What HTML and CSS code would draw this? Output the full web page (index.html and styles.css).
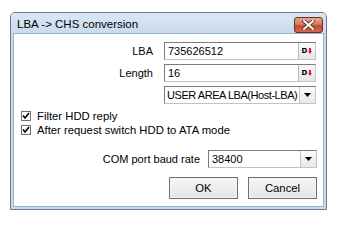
FILE: index.html
```html
<!DOCTYPE html>
<html>
<head>
<meta charset="utf-8">
<link rel="stylesheet" href="styles.css">
</head>
<body>
<div class="win">
  <div class="titlebar">
    <span class="title">LBA -&gt; CHS conversion</span>
    <div class="close">
      <svg width="13" height="10" viewBox="0 0 13 10">
        <path d="M2 1 L11 9 M11 1 L2 9" stroke="#5a2a20" stroke-width="3.6" stroke-linecap="square"/>
        <path d="M2 1 L11 9 M11 1 L2 9" stroke="#ffffff" stroke-width="2" stroke-linecap="square"/>
      </svg>
    </div>
  </div>
  <div class="client">
    <div class="grid">
      <label class="lbl">LBA</label>
      <div class="field"><span class="val">735626512</span><span class="dbtn"><b>D</b><svg width="4" height="6" viewBox="0 0 4 6"><path d="M1 0 H3 V3 H4 L2 6 L0 3 H1 Z" fill="#e02020"/></svg></span></div>
      <label class="lbl">Length</label>
      <div class="field"><span class="val">16</span><span class="dbtn"><b>D</b><svg width="4" height="6" viewBox="0 0 4 6"><path d="M1 0 H3 V3 H4 L2 6 L0 3 H1 Z" fill="#e02020"/></svg></span></div>
      <span></span>
      <div class="field"><span class="val narrow">USER AREA LBA(Host-LBA)</span><span class="arrow"><svg width="7" height="4" viewBox="0 0 7 4"><path d="M0 0 H7 L3.5 4 Z" fill="#000"/></svg></span></div>
    </div>
    <div class="checks">
      <div class="chk"><span class="box"><svg width="8" height="8" viewBox="0 0 8 8"><path d="M1 3.5 L3 6 L7 1" stroke="#000" stroke-width="1.6" fill="none"/></svg></span>Filter HDD reply</div>
      <div class="chk"><span class="box"><svg width="8" height="8" viewBox="0 0 8 8"><path d="M1 3.5 L3 6 L7 1" stroke="#000" stroke-width="1.6" fill="none"/></svg></span>After request switch HDD to ATA mode</div>
    </div>
    <div class="baud">
      <span class="blbl">COM port baud rate</span>
      <div class="field bfield"><span class="val">38400</span><span class="arrow"><svg width="7" height="4" viewBox="0 0 7 4"><path d="M0 0 H7 L3.5 4 Z" fill="#000"/></svg></span></div>
    </div>
    <div class="buttons">
      <div class="btn">OK</div>
      <div class="btn">Cancel</div>
    </div>
  </div>
</div>
</body>
</html>
```

FILE: styles.css
```css
html, body {
  margin: 0;
  padding: 0;
  background: #ffffff;
}
body {
  font-family: "Liberation Sans", Arial, sans-serif;
  font-size: 11px;
  color: #000;
  padding: 12px 0 0 10px;
}
.win {
  width: 317px;
  height: 198px;
  box-sizing: border-box;
  border: 1px solid #6b7a8c;
  border-radius: 5px 5px 0 0;
  background: #c6d9ee;
  display: flex;
  flex-direction: column;
  padding: 0 2px 2px 2px;
}
.titlebar {
  height: 20px;
  display: flex;
  align-items: center;
  justify-content: space-between;
  background: linear-gradient(#dbe7f4, #c9dbef);
  margin: 0 -2px;
  padding: 0 3px 0 6px;
  border-radius: 4px 4px 0 0;
}
.title {
  font-size: 11.5px;
  padding-top: 2px;
}
.close {
  width: 29px;
  height: 16px;
  box-sizing: border-box;
  border: 1px solid #6d2a1f;
  border-radius: 3px;
  background: linear-gradient(#e7a796 0%, #d47963 45%, #c24a33 55%, #d0694c 100%);
  display: flex;
  align-items: center;
  justify-content: center;
  margin-top: 4px;
}
.client {
  flex: 1;
  background: #ffffff;
  border: 1px solid #9db2cb;
  padding: 8px 0 0 0;
  display: flex;
  flex-direction: column;
}
.grid {
  display: grid;
  grid-template-columns: 139px 152px;
  column-gap: 11px;
  row-gap: 4px;
  grid-auto-rows: 18px;
}
.lbl {
  text-align: right;
  align-self: center;
}
.field {
  box-sizing: border-box;
  height: 18px;
  border: 1px solid #7a7a7a;
  border-right-color: #c3c3c3;
  border-bottom-color: #c3c3c3;
  display: flex;
  align-items: center;
  background: #fff;
  overflow: hidden;
}
.val {
  flex: 1;
  padding-left: 3px;
  white-space: nowrap;
  overflow: hidden;
}
.narrow {
  letter-spacing: -0.45px;
  padding-left: 2px;
}
.dbtn {
  width: 17px;
  height: 16px;
  box-sizing: border-box;
  border-left: 1px solid #b8b8b8;
  background: linear-gradient(#fafafa, #e6e6e6);
  display: flex;
  align-items: center;
  justify-content: center;
  gap: 1px;
}
.dbtn b {
  font-size: 7px;
  font-family: "DejaVu Sans", sans-serif;
  font-weight: bold;
  line-height: 7px;
}
.arrow {
  width: 16px;
  height: 16px;
  box-sizing: border-box;
  border-left: 1px solid #c0c0c0;
  background: linear-gradient(#fbfbfb, #e8e8e8);
  display: flex;
  align-items: center;
  justify-content: center;
}
.checks {
  margin-top: 5px;
  padding-left: 7px;
}
.chk {
  height: 14px;
  display: flex;
  align-items: center;
  font-size: 11.3px;
}
.box {
  width: 10px;
  height: 10px;
  box-sizing: border-box;
  border: 1px solid #707070;
  background: #fff;
  display: flex;
  align-items: center;
  justify-content: center;
  margin-right: 6px;
}
.baud {
  margin-top: 13px;
  display: flex;
  align-items: center;
  justify-content: flex-end;
  padding-right: 6px;
  gap: 8px;
}
.bfield {
  width: 109px;
}
.buttons {
  margin-top: 9px;
  display: flex;
  justify-content: flex-end;
  padding-right: 6px;
  gap: 10px;
}
.btn {
  width: 69px;
  height: 22px;
  box-sizing: border-box;
  border: 1px solid #707070;
  box-shadow: inset 0 0 0 1px #f4f4f4;
  background: linear-gradient(#f6f6f6, #e4e4e4);
  display: flex;
  align-items: center;
  justify-content: center;
  font-size: 11.3px;
}
```
